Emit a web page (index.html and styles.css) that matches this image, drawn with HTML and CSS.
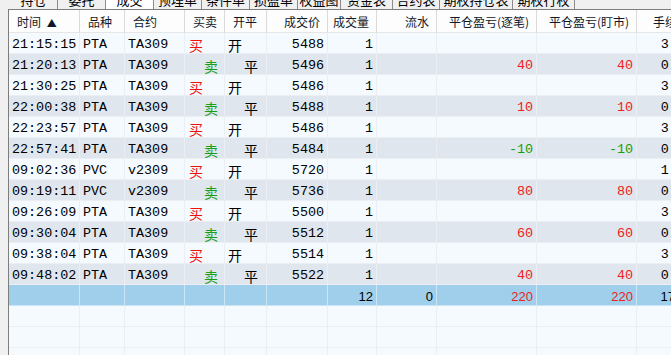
FILE: index.html
```html
<!DOCTYPE html>
<html lang="zh">

<head>
    <meta charset="UTF-8">
    <title>成交</title>
    <link rel="stylesheet" href="styles.css">
</head>

<body>

    <div class="panel">
        <div class="tabs">
            <div class="tab t-first"><span>持仓</span></div>
            <div class="tab t-48"><span>委托</span></div>
            <div class="tab t-48 active"><span>成交</span></div>
            <div class="tab t-48"><span>预埋单</span></div>
            <div class="tab t-48"><span>条件单</span></div>
            <div class="tab t-48"><span>损盈单</span></div>
            <div class="tab t-43"><span>权益图</span></div>
            <div class="tab t-52"><span>资金表</span></div>
            <div class="tab t-47"><span>合约表</span></div>
            <div class="tab t-73"><span>期权持仓表</span></div>
            <div class="tab t-62"><span>期权行权</span></div>
        </div>

        <div class="grid">
            <table class="trades">
                <colgroup>
                    <col class="w-time">
                    <col class="w-kind">
                    <col class="w-code">
                    <col class="w-side">
                    <col class="w-oc">
                    <col class="w-price">
                    <col class="w-qty">
                    <col class="w-flow">
                    <col class="w-pnl">
                    <col class="w-pnl">
                    <col class="w-fee">
                </colgroup>
                <thead>
                    <tr>
                        <th class="l">时间 <span class="sort">▲</span></th>
                        <th class="l">品种</th>
                        <th class="l">合约</th>
                        <th class="l">买卖</th>
                        <th class="l">开平</th>
                        <th class="r">成交价</th>
                        <th class="r">成交量</th>
                        <th class="r">流水</th>
                        <th class="r">平仓盈亏(逐笔)</th>
                        <th class="r">平仓盈亏(盯市)</th>
                        <th class="l fee-h">手续费</th>
                    </tr>
                </thead>
                <tbody>
                    <tr>
                        <td>21:15:15</td><td>PTA</td><td>TA309</td>
                        <td class="cn buy">买</td><td class="cn open">开</td>
                        <td class="r">5488</td><td class="r">1</td><td></td><td></td><td></td><td class="r">3.01</td>
                    </tr>
                    <tr class="alt">
                        <td>21:20:13</td><td>PTA</td><td>TA309</td>
                        <td class="cn sell">卖</td><td class="cn close">平</td>
                        <td class="r">5496</td><td class="r">1</td><td></td><td class="r up">40</td><td class="r up">40</td><td class="r">0.00</td>
                    </tr>
                    <tr>
                        <td>21:30:25</td><td>PTA</td><td>TA309</td>
                        <td class="cn buy">买</td><td class="cn open">开</td>
                        <td class="r">5486</td><td class="r">1</td><td></td><td></td><td></td><td class="r">3.01</td>
                    </tr>
                    <tr class="alt">
                        <td>22:00:38</td><td>PTA</td><td>TA309</td>
                        <td class="cn sell">卖</td><td class="cn close">平</td>
                        <td class="r">5488</td><td class="r">1</td><td></td><td class="r up">10</td><td class="r up">10</td><td class="r">0.00</td>
                    </tr>
                    <tr>
                        <td>22:23:57</td><td>PTA</td><td>TA309</td>
                        <td class="cn buy">买</td><td class="cn open">开</td>
                        <td class="r">5486</td><td class="r">1</td><td></td><td></td><td></td><td class="r">3.01</td>
                    </tr>
                    <tr class="alt">
                        <td>22:57:41</td><td>PTA</td><td>TA309</td>
                        <td class="cn sell">卖</td><td class="cn close">平</td>
                        <td class="r">5484</td><td class="r">1</td><td></td><td class="r down">-10</td><td class="r down">-10</td><td class="r">0.00</td>
                    </tr>
                    <tr>
                        <td>09:02:36</td><td>PVC</td><td>v2309</td>
                        <td class="cn buy">买</td><td class="cn open">开</td>
                        <td class="r">5720</td><td class="r">1</td><td></td><td></td><td></td><td class="r">1.00</td>
                    </tr>
                    <tr class="alt">
                        <td>09:19:11</td><td>PVC</td><td>v2309</td>
                        <td class="cn sell">卖</td><td class="cn close">平</td>
                        <td class="r">5736</td><td class="r">1</td><td></td><td class="r up">80</td><td class="r up">80</td><td class="r">0.00</td>
                    </tr>
                    <tr>
                        <td>09:26:09</td><td>PTA</td><td>TA309</td>
                        <td class="cn buy">买</td><td class="cn open">开</td>
                        <td class="r">5500</td><td class="r">1</td><td></td><td></td><td></td><td class="r">3.01</td>
                    </tr>
                    <tr class="alt">
                        <td>09:30:04</td><td>PTA</td><td>TA309</td>
                        <td class="cn sell">卖</td><td class="cn close">平</td>
                        <td class="r">5512</td><td class="r">1</td><td></td><td class="r up">60</td><td class="r up">60</td><td class="r">0.00</td>
                    </tr>
                    <tr>
                        <td>09:38:04</td><td>PTA</td><td>TA309</td>
                        <td class="cn buy">买</td><td class="cn open">开</td>
                        <td class="r">5514</td><td class="r">1</td><td></td><td></td><td></td><td class="r">3.01</td>
                    </tr>
                    <tr class="alt">
                        <td>09:48:02</td><td>PTA</td><td>TA309</td>
                        <td class="cn sell">卖</td><td class="cn close">平</td>
                        <td class="r">5522</td><td class="r">1</td><td></td><td class="r up">40</td><td class="r up">40</td><td class="r">0.00</td>
                    </tr>
                    <tr class="sum">
                        <td></td><td></td><td></td><td></td><td></td><td></td>
                        <td class="r">12</td><td class="r">0</td><td class="r up">220</td><td class="r up">220</td><td class="r">17.05</td>
                    </tr>
                    <tr class="empty">
                        <td></td><td></td><td></td><td></td><td></td><td></td><td></td><td></td><td></td><td></td><td></td>
                    </tr>
                    <tr class="empty">
                        <td></td><td></td><td></td><td></td><td></td><td></td><td></td><td></td><td></td><td></td><td></td>
                    </tr>
                    <tr class="empty">
                        <td></td><td></td><td></td><td></td><td></td><td></td><td></td><td></td><td></td><td></td><td></td>
                    </tr>
                </tbody>
            </table>
        </div>
    </div>

</body>

</html>
```

FILE: styles.css
```css
* {
    margin: 0;
    padding: 0;
    box-sizing: border-box;
}

body {
    background: #ffffff;
    font-family: "Noto Sans CJK SC", "Liberation Sans", sans-serif;
}

.panel {
    width: 671px;
    height: 355px;
    background: #f0f0f0;
    display: flex;
    flex-direction: column;
    overflow: hidden;
}

/* tab strip, scrolled so only the lower half shows */
.tabs {
    height: 9px;
    display: flex;
    padding-left: 10px;
    overflow: hidden;
    flex-shrink: 0;
}

.tab {
    height: 9px;
    border-right: 1px solid #8c8c8c;
    text-align: center;
    font-size: 13px;
    color: #000;
    overflow: hidden;
}

.tab span {
    display: block;
    line-height: 18px;
    margin-top: -9px;
    white-space: nowrap;
}

.tab.active {
    background: #ffffff;
}

.t-first { width: 48px; }
.t-48 { width: 48px; }
.t-43 { width: 43px; }
.t-52 { width: 52px; }
.t-47 { width: 47px; }
.t-73 { width: 73px; }
.t-62 { width: 62px; }

.grid {
    flex: 1;
    margin-left: 8px;
    border-left: 1px solid #7d7d7d;
    border-top: 1px solid #7d7d7d;
    background: #f4fafe;
    overflow: hidden;
}

.trades {
    table-layout: fixed;
    border-collapse: separate;
    border-spacing: 0;
    width: 688px;
}

.w-time { width: 71px; }
.w-kind { width: 45px; }
.w-code { width: 60px; }
.w-side { width: 40px; }
.w-oc { width: 42px; }
.w-price { width: 61px; }
.w-qty { width: 49px; }
.w-flow { width: 60px; }
.w-pnl { width: 100px; }
.w-fee { width: 60px; }

th {
    height: 23px;
    padding-top: 1px;
    background: #fdfdfd;
    font-weight: normal;
    font-size: 12px;
    color: #101828;
    white-space: nowrap;
    overflow: hidden;
    border-right: 1px solid #dadada;
    border-bottom: 1px solid #e6e6e6;
}

th.l {
    text-align: left;
    padding-left: 8px;
}

th.r {
    text-align: right;
    padding-right: 7px;
}

th.fee-h {
    padding-left: 16px;
}

.sort {
    font-size: 10px;
    margin-left: 3px;
}

td {
    height: 21px;
    padding-top: 3px;
    font-family: "Liberation Mono", monospace;
    font-size: 13.4px;
    line-height: 16px;
    color: #000;
    white-space: nowrap;
    overflow: hidden;
    padding-left: 3px;
    border-right: 1px solid #ebeff3;
    border-bottom: 1px solid #ebeff3;
    background: #f4fafe;
}

tr.alt td {
    background: #dfe6ee;
}

td.r {
    text-align: right;
    padding-left: 0;
    padding-right: 3px;
}

td.cn {
    font-family: "Noto Sans CJK SC", sans-serif;
    font-size: 14px;
}

td.buy {
    color: #f01010;
    padding-left: 4px;
}

td.sell {
    color: #17a017;
    padding-left: 19px;
}

td.open {
    padding-left: 3px;
}

td.close {
    padding-left: 19px;
}

.up {
    color: #f02020;
}

.down {
    color: #12a012;
}

tr.sum td {
    background: #9fcfeb;
    font-family: "Liberation Sans", sans-serif;
    font-size: 13px;
    border-right-color: #cbe5f4;
    border-bottom-color: #cbe5f4;
}

tr.sum td.up {
    color: #f02020;
}
```
